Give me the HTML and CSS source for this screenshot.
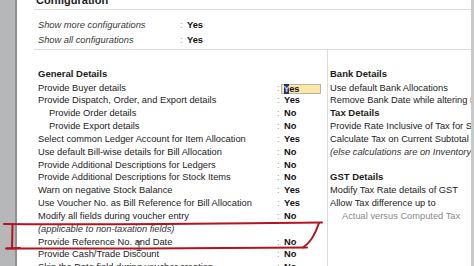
FILE: index.html
```html
<!DOCTYPE html>
<html>
<head>
<meta charset="utf-8">
<link rel="stylesheet" href="styles.css">
</head>
<body>
<div class="screen">
  <div class="lbar"></div>
  <div class="main">
    <div class="title">Configuration</div>
    <div class="configs">
      <div class="crow"><span class="clabel">Show more configurations</span><span class="colon">:</span><span class="val">Yes</span></div>
      <div class="crow"><span class="clabel">Show all configurations</span><span class="colon">:</span><span class="val">Yes</span></div>
    </div>
    <div class="details">
      <div class="col-left">
        <div class="head">General Details</div>
        <div class="row"><span class="lbl">Provide Buyer details</span><span class="colon">:</span><span class="val"><span class="edit"><span class="caret">Y</span>es</span></span></div>
        <div class="row"><span class="lbl">Provide Dispatch, Order, and Export details</span><span class="colon">:</span><span class="val">Yes</span></div>
        <div class="row"><span class="lbl sub">Provide Order details</span><span class="colon">:</span><span class="val">No</span></div>
        <div class="row"><span class="lbl sub">Provide Export details</span><span class="colon">:</span><span class="val">No</span></div>
        <div class="row"><span class="lbl">Select common Ledger Account for Item Allocation</span><span class="colon">:</span><span class="val">Yes</span></div>
        <div class="row"><span class="lbl">Use default Bill-wise details for Bill Allocation</span><span class="colon">:</span><span class="val">No</span></div>
        <div class="row"><span class="lbl">Provide Additional Descriptions for Ledgers</span><span class="colon">:</span><span class="val">No</span></div>
        <div class="row"><span class="lbl">Provide Additional Descriptions for Stock Items</span><span class="colon">:</span><span class="val">No</span></div>
        <div class="row"><span class="lbl">Warn on negative Stock Balance</span><span class="colon">:</span><span class="val">Yes</span></div>
        <div class="row"><span class="lbl">Use Voucher No. as Bill Reference for Bill Allocation</span><span class="colon">:</span><span class="val">Yes</span></div>
        <div class="row"><span class="lbl">Modify all fields during voucher entry</span><span class="colon">:</span><span class="val">No</span></div>
        <div class="row"><span class="lbl note">(applicable to non-taxation fields)</span></div>
        <div class="row"><span class="lbl">Provide Reference No. and Date</span><span class="colon">:</span><span class="val">No</span></div>
        <div class="row"><span class="lbl">Provide Cash/Trade Discount</span><span class="colon">:</span><span class="val">No</span></div>
        <div class="row"><span class="lbl">Skip the Date field during voucher creation</span><span class="colon">:</span><span class="val">No</span></div>
      </div>
      <div class="col-right">
        <div class="head">Bank Details</div>
        <div class="rrow">Use default Bank Allocations</div>
        <div class="rrow">Remove Bank Date while altering Reconciled Transactions</div>
        <div class="rrow rhead">Tax Details</div>
        <div class="rrow">Provide Rate Inclusive of Tax for Stock Items</div>
        <div class="rrow">Calculate Tax on Current Subtotal</div>
        <div class="rrow note">(else calculations are on <i>Inventory</i> Total)</div>
        <div class="rrow"></div>
        <div class="rrow rhead">GST Details</div>
        <div class="rrow">Modify Tax Rate details of GST</div>
        <div class="rrow">Allow Tax difference up to</div>
        <div class="rrow sub grey">Actual versus Computed Tax</div>
      </div>
    </div>
  </div>
  <div class="rbar"></div>
  <svg class="mark" width="474" height="266" viewBox="0 0 474 266">
    <path d="M4 224 C 80 225, 200 223.5, 322 222.5" />
    <path d="M319 223 C 316 232, 312 242, 303 247.5" />
    <path d="M307 247.5 C 220 248.5, 100 249, 7 248.5" />
    <path d="M12.5 224.5 L 12 248" />
    <path d="M6 248.5 L 20 248" />
  </svg>
  <svg class="ibeam" width="6" height="10" viewBox="0 0 6 10">
    <path d="M0.5 0.5 H5.5 M3 0.5 V9.5 M0.5 9.5 H5.5" />
  </svg>
</div>
</body>
</html>
```
FILE: styles.css
```css
html, body {
  margin: 0;
  padding: 0;
  background: #ffffff;
}
.screen {
  position: relative;
  width: 474px;
  height: 266px;
  overflow: hidden;
  display: flex;
  font-family: "Liberation Sans", Arial, sans-serif;
  font-size: 9.3px;
  color: #1c1c1c;
}
.lbar {
  width: 15px;
  flex: none;
  background: #b6b7b9;
  border-right: 2px solid #8e9092;
}
.rbar {
  width: 3px;
  flex: none;
  background: #c9c9c9;
}
.main {
  flex: 1;
  min-width: 0;
  padding-left: 17px;
  display: flex;
  flex-direction: column;
}
.title {
  margin-top: -7px;
  padding-left: 2px;
  padding-bottom: 2px;
  font-size: 11px;
  font-weight: bold;
  line-height: 14px;
  color: #222;
  border-bottom: 1px solid #dcdcdc;
}
.configs {
  padding: 7.5px 0 0.5px 4px;
  border-bottom: 1px solid #dcdcdc;
}
.crow {
  display: grid;
  grid-template-columns: 142px 7px auto;
  line-height: 15.5px;
  white-space: nowrap;
}
.clabel {
  font-style: italic;
  color: #3a3a3a;
}
.colon {
  color: #a0a0a0;
}
.val {
  font-weight: bold;
  color: #111;
}
.details {
  flex: 1;
  display: flex;
  min-height: 0;
}
.col-left {
  width: 289px;
  flex: none;
  padding: 15.5px 0 0 4px;
}
.head {
  font-weight: bold;
  font-size: 9.5px;
  line-height: 16px;
  color: #1a1a1a;
  white-space: nowrap;
}
.row {
  display: grid;
  grid-template-columns: 239px 7px auto;
  line-height: 12.85px;
  height: 12.85px;
  white-space: nowrap;
}
.lbl.sub {
  padding-left: 11px;
}
.note {
  font-style: italic;
  color: #333;
}
.edit {
  display: inline-block;
  box-sizing: border-box;
  width: 40px;
  height: 10.5px;
  line-height: 9px;
  margin-left: -3px;
  padding-left: 1.5px;
  background: #fde7a7;
  border: 1px solid #b9b3a2;
  vertical-align: -1px;
}
.caret {
  background: #22356b;
  color: #c9d3f5;
}
.col-right {
  flex: 1;
  min-width: 0;
  overflow: hidden;
  border-left: 1px solid #dcdcdc;
  padding: 15.5px 0 0 2px;
}
.rrow {
  line-height: 12.85px;
  height: 12.85px;
  white-space: nowrap;
}
.rrow.rhead {
  font-weight: bold;
  font-size: 9.5px;
}
.rrow.sub {
  padding-left: 12px;
}
.grey {
  color: #8a8a8a;
}
.mark {
  position: absolute;
  left: 0;
  top: 0;
  fill: none;
  stroke: #b3141e;
  stroke-width: 2;
  stroke-linecap: round;
}
.ibeam {
  position: absolute;
  left: 136px;
  top: 241px;
  fill: none;
  stroke: #555;
  stroke-width: 1;
}
```
